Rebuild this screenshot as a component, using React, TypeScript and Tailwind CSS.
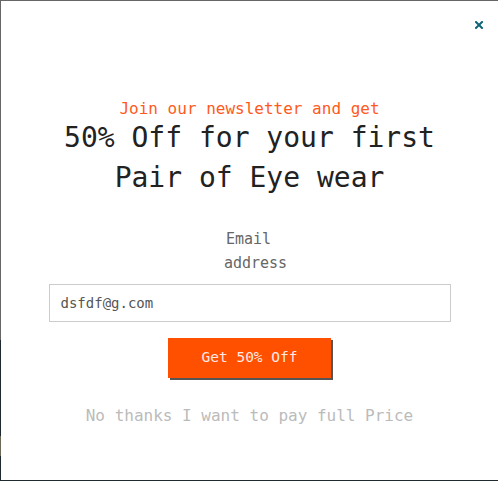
import React from "react";

export default function App() {
  const mono = { fontFamily: '"DejaVu Sans Mono", "Liberation Mono", monospace' };
  return (
    <div
      className="w-[498px] h-[481px] overflow-hidden pt-px pl-px pb-px bg-[linear-gradient(to_bottom,#666_0px,#666_340px,#1e2a30_340px,#1e2a30_436px,#6b6a58_436px,#6b6a58_456px,#1e2a30_456px)]"
      style={mono}
    >
      <div className="relative h-full w-full bg-white flex flex-col items-center">
        <button className="absolute top-[20px] right-[15px] w-[8px] h-[8px] flex items-center justify-center">
          <svg width="8" height="8" viewBox="0 0 8 8">
            <path d="M1 1 L7 7 M7 1 L1 7" stroke="#0f6478" strokeWidth="2" strokeLinecap="square" />
          </svg>
        </button>
        <p className="mt-[99px] text-[16px] leading-[18px] text-[#ff5a1c]">
          Join our newsletter and get
        </p>
        <h1 className="text-[28px] leading-[40px] text-[#222] text-center">
          50% Off for your first
          <br />
          Pair of Eye wear
        </h1>
        <div className="mt-[29px] ml-[12px] text-[15px] leading-[24px] text-[#666]">
          <div className="ml-[2px]">Email</div>
          <div>address</div>
        </div>
        <div className="mt-[9px] w-[402px] h-[38px] border border-[#ccc] flex items-center px-[11px]">
          <span className="text-[14px] text-[#555]">dsfdf@g.com</span>
        </div>
        <button className="mt-[16px] w-[163px] h-[40px] bg-[#ff5000] text-[#ffe9e6] text-[14.5px] shadow-[2px_2px_0_#555] flex items-center justify-center">
          Get 50% Off
        </button>
        <p className="mt-[26px] text-[16px] leading-[24px] text-[#bbb]">
          No thanks I want to pay full Price
        </p>
      </div>
    </div>
  );
}
